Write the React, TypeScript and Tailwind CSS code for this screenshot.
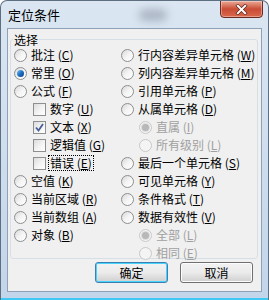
import React from "react";

type Opt = { label: string; key: string; kind: "radio" | "check"; on?: boolean; off?: boolean; indent?: boolean; focus?: boolean };

const LEFT: Opt[] = [
  { label: "批注", key: "C", kind: "radio" },
  { label: "常里", key: "O", kind: "radio", on: true },
  { label: "公式", key: "F", kind: "radio" },
  { label: "数字", key: "U", kind: "check", indent: true },
  { label: "文本", key: "X", kind: "check", indent: true, on: true },
  { label: "逻辑值", key: "G", kind: "check", indent: true },
  { label: "错误", key: "E", kind: "check", indent: true, focus: true },
  { label: "空值", key: "K", kind: "radio" },
  { label: "当前区域", key: "R", kind: "radio" },
  { label: "当前数组", key: "A", kind: "radio" },
  { label: "对象", key: "B", kind: "radio" },
];

const RIGHT: Opt[] = [
  { label: "行内容差异单元格", key: "W", kind: "radio" },
  { label: "列内容差异单元格", key: "M", kind: "radio" },
  { label: "引用单元格", key: "P", kind: "radio" },
  { label: "从属单元格", key: "D", kind: "radio" },
  { label: "直属", key: "I", kind: "radio", indent: true, off: true, on: true },
  { label: "所有级别", key: "L", kind: "radio", indent: true, off: true },
  { label: "最后一个单元格", key: "S", kind: "radio" },
  { label: "可见单元格", key: "Y", kind: "radio" },
  { label: "条件格式", key: "T", kind: "radio" },
  { label: "数据有效性", key: "V", kind: "radio" },
  { label: "全部", key: "L", kind: "radio", indent: true, off: true, on: true },
  { label: "相同", key: "E", kind: "radio", indent: true, off: true },
];

function Radio({ on, off }: { on?: boolean; off?: boolean }) {
  return (
    <span
      className={
        "flex h-[13px] w-[13px] flex-none items-center justify-center rounded-full border " +
        (off
          ? "border-[#c8c8c8] bg-[#f4f4f4]"
          : "border-[#8c8e90] bg-gradient-to-br from-[#d8d8d8] via-[#f4f4f4] to-white")
      }
    >
      {on && (
        <span
          className={
            "h-[7px] w-[7px] rounded-full " +
            (off
              ? "bg-[#b8b8b8] ring-1 ring-[#dcdcdc]"
              : "bg-gradient-to-br from-[#7cc3f5] via-[#1e6fc2] to-[#0d3f88]")
          }
        />
      )}
    </span>
  );
}

function Check({ on }: { on?: boolean }) {
  return (
    <span className="flex h-[13px] w-[13px] flex-none items-center justify-center border border-[#8e8f8f] bg-gradient-to-br from-[#dcdcdc] via-[#f2f2f2] to-white">
      {on && (
        <svg viewBox="0 0 11 11" className="h-[11px] w-[11px]">
          <path d="M2 5.5 L4.5 8.5 L9 2" fill="none" stroke="#4a5f97" strokeWidth="1.8" />
        </svg>
      )}
    </span>
  );
}

function Row({ o, side }: { o: Opt; side: "l" | "r" }) {
  const pad = o.indent ? (side === "l" ? "pl-[19px]" : "pl-[18px]") : "";
  return (
    <div className={"flex h-[18px] items-center " + pad}>
      {o.kind === "radio" ? <Radio on={o.on} off={o.off} /> : <Check on={o.on} />}
      <span
        className={
          "ml-[3px] whitespace-nowrap px-[1px] leading-[14px] " +
          (o.off ? "text-[#a0a0a0] " : "text-black ") +
          (o.focus ? "outline-1 outline-dotted outline-black" : "")
        }
      >
        {o.label} (<span className="underline underline-offset-1">{o.key}</span>)
      </span>
    </div>
  );
}

export default function App() {
  return (
    <div
      className="relative h-[300px] w-[269px] overflow-hidden rounded-t-[7px] border border-b-0 border-[#5f6f82] bg-gradient-to-b from-[#dbe6f2] to-[#c3d5ea] text-[12px]"
      style={{ fontFamily: '"Noto Sans CJK SC", "Noto Sans", sans-serif' }}
    >
      {/* blurred glass blob */}
      <div className="absolute left-[138px] top-[8px] h-[12px] w-[28px] rounded-full bg-[#7d8796] opacity-50 blur-[4px]" />

      <div className="flex h-[27px] items-center pl-[7px] text-[13px] leading-none text-black">定位条件</div>

      <button className="absolute right-[5px] top-[-1px] flex h-[18px] w-[43px] items-center justify-center rounded-b-[4px] border border-[#6d2a20] bg-gradient-to-b from-[#e9a997] via-[#c94c35] to-[#d9684b] shadow-[inset_0_0_0_1px_rgba(255,255,255,0.35)]">
        <svg viewBox="0 0 14 12" className="h-[11px] w-[13px]">
          <path d="M3 2 L11 10 M11 2 L3 10" stroke="#5a2218" strokeWidth="3.6" strokeLinecap="square" />
          <path d="M3 2 L11 10 M11 2 L3 10" stroke="#ffffff" strokeWidth="2.2" strokeLinecap="square" />
        </svg>
      </button>

      <div className="mx-[6px] h-[264px] w-[255px] border border-[#8fa1b6] bg-[#f0f0f0]">
        <fieldset className="ml-[2px] mt-[4px] h-[226px] w-[248px] rounded-[3px] border border-[#d5dfe5] pl-[3px]">
          <legend className="ml-[-1px] px-[1px] leading-[13px] text-black">选择</legend>
          <div className="flex">
            <div className="w-[107px]">
              {LEFT.map((o) => (
                <Row key={o.label} o={o} side="l" />
              ))}
            </div>
            <div className="flex-1">
              {RIGHT.map((o) => (
                <Row key={o.label} o={o} side="r" />
              ))}
            </div>
          </div>
        </fieldset>

        <div className="mt-[3px] flex justify-end gap-[12px] pr-[8px]">
          <button className="h-[21px] w-[73px] rounded-[3px] border border-[#3c7fb1] bg-gradient-to-b from-[#f2f2f2] via-[#ebebeb] to-[#cfcfcf] text-black shadow-[inset_0_0_0_1px_#48d3ff]">
            确定
          </button>
          <button className="h-[21px] w-[73px] rounded-[3px] border border-[#707070] bg-gradient-to-b from-[#f2f2f2] via-[#ebebeb] to-[#cfcfcf] text-black shadow-[inset_0_0_0_1px_#fcfcfc]">
            取消
          </button>
        </div>
      </div>
      <div className="absolute bottom-0 left-0 h-[2px] w-full bg-[#40c8f4]" />
    </div>
  );
}
